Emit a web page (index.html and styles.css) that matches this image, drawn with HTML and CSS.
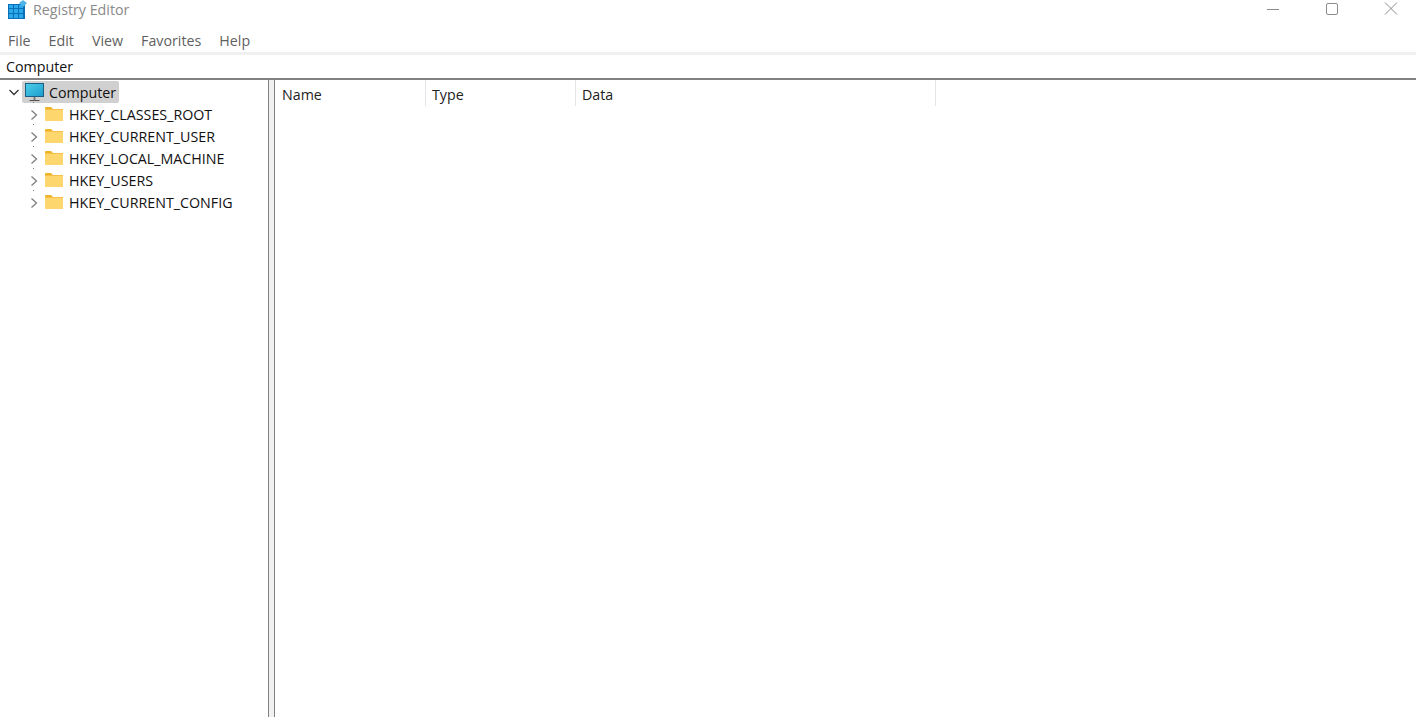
FILE: index.html
```html
<!DOCTYPE html>
<html lang="en">
<head>
<meta charset="utf-8">
<title>Registry Editor</title>
<link rel="stylesheet" href="styles.css">
</head>
<body>
<div class="window">
  <header class="titlebar">
    <svg class="app-icon" width="20" height="20" viewBox="0 0 20 20">
      <rect x="0" y="4" width="17" height="15" fill="#0b6fb5"/>
      <g fill="#29a9ec">
        <rect x="1" y="5" width="4" height="3"/><rect x="6" y="5" width="4" height="3"/><rect x="11" y="5" width="4" height="3"/>
        <rect x="1" y="9" width="4" height="4"/><rect x="6" y="9" width="4" height="4"/><rect x="11" y="9" width="4" height="4"/>
        <rect x="1" y="14" width="4" height="4"/><rect x="6" y="14" width="4" height="4"/><rect x="11" y="14" width="4" height="4"/>
      </g>
      <path d="M15 0 L19 3 L15 7 L11 3 Z" fill="#4fb4e6"/>
    </svg>
    <span class="app-title">Registry Editor</span>
    <div class="controls">
      <svg width="14" height="14" viewBox="0 0 14 14"><path d="M1 8.5H13" stroke="#8c8c8c" fill="none"/></svg>
      <svg width="14" height="14" viewBox="0 0 14 14"><rect x="1.5" y="2.5" width="11" height="11" rx="1.5" stroke="#8c8c8c" fill="none"/></svg>
      <svg width="14" height="14" viewBox="0 0 14 14"><path d="M1 1.5L13 13.5M13 1.5L1 13.5" stroke="#8c8c8c" fill="none"/></svg>
    </div>
  </header>
  <nav class="menubar">
    <span>File</span><span>Edit</span><span>View</span><span>Favorites</span><span>Help</span>
  </nav>
  <div class="address">Computer</div>
  <main class="panes">
    <aside class="tree">
      <div class="node root">
        <svg class="chev" width="12" height="12" viewBox="0 0 12 12"><path d="M1.5 4L6 8.5L10.5 4" stroke="#333" stroke-width="1.3" fill="none"/></svg>
        <span class="selected">
          <svg width="20" height="20" viewBox="0 0 20 20">
            <defs><linearGradient id="scr" x1="0" y1="0" x2="1" y2="1"><stop offset="0" stop-color="#4fd0e8"/><stop offset="1" stop-color="#1a9ccf"/></linearGradient></defs>
            <rect x="0.5" y="1.5" width="18" height="13" fill="url(#scr)" stroke="#1b5f86"/>
            <rect x="8.5" y="15" width="2" height="3" fill="#7a7a7a"/>
            <rect x="4.5" y="18" width="10" height="1" fill="#555"/>
          </svg>
          <span>Computer</span>
        </span>
      </div>
      <div class="node child"><svg class="chev" width="10" height="12" viewBox="0 0 10 12"><path d="M2.5 1.5L7.5 6L2.5 10.5" stroke="#808080" stroke-width="1.3" fill="none"/></svg><svg class="folder" width="19" height="14" viewBox="0 0 19 14"><path d="M0 2V1Q0 0 1 0H6L8 2Z" fill="#f0b429"/><rect x="0" y="2" width="18" height="12" fill="#fdd76d"/><rect x="0" y="2" width="18" height="1" fill="#f5c04a"/></svg><span>HKEY_CLASSES_ROOT</span></div>
      <div class="node child"><svg class="chev" width="10" height="12" viewBox="0 0 10 12"><path d="M2.5 1.5L7.5 6L2.5 10.5" stroke="#808080" stroke-width="1.3" fill="none"/></svg><svg class="folder" width="19" height="14" viewBox="0 0 19 14"><path d="M0 2V1Q0 0 1 0H6L8 2Z" fill="#f0b429"/><rect x="0" y="2" width="18" height="12" fill="#fdd76d"/><rect x="0" y="2" width="18" height="1" fill="#f5c04a"/></svg><span>HKEY_CURRENT_USER</span></div>
      <div class="node child"><svg class="chev" width="10" height="12" viewBox="0 0 10 12"><path d="M2.5 1.5L7.5 6L2.5 10.5" stroke="#808080" stroke-width="1.3" fill="none"/></svg><svg class="folder" width="19" height="14" viewBox="0 0 19 14"><path d="M0 2V1Q0 0 1 0H6L8 2Z" fill="#f0b429"/><rect x="0" y="2" width="18" height="12" fill="#fdd76d"/><rect x="0" y="2" width="18" height="1" fill="#f5c04a"/></svg><span>HKEY_LOCAL_MACHINE</span></div>
      <div class="node child"><svg class="chev" width="10" height="12" viewBox="0 0 10 12"><path d="M2.5 1.5L7.5 6L2.5 10.5" stroke="#808080" stroke-width="1.3" fill="none"/></svg><svg class="folder" width="19" height="14" viewBox="0 0 19 14"><path d="M0 2V1Q0 0 1 0H6L8 2Z" fill="#f0b429"/><rect x="0" y="2" width="18" height="12" fill="#fdd76d"/><rect x="0" y="2" width="18" height="1" fill="#f5c04a"/></svg><span>HKEY_USERS</span></div>
      <div class="node child"><svg class="chev" width="10" height="12" viewBox="0 0 10 12"><path d="M2.5 1.5L7.5 6L2.5 10.5" stroke="#808080" stroke-width="1.3" fill="none"/></svg><svg class="folder" width="19" height="14" viewBox="0 0 19 14"><path d="M0 2V1Q0 0 1 0H6L8 2Z" fill="#f0b429"/><rect x="0" y="2" width="18" height="12" fill="#fdd76d"/><rect x="0" y="2" width="18" height="1" fill="#f5c04a"/></svg><span>HKEY_CURRENT_CONFIG</span></div>
    </aside>
    <div class="splitter"></div>
    <section class="list">
      <div class="headers">
        <div class="col col-name">Name</div>
        <div class="col col-type">Type</div>
        <div class="col col-data">Data</div>
      </div>
    </section>
  </main>
</div>
</body>
</html>
```
FILE: styles.css
```css
html, body {
  margin: 0;
  height: 100%;
  background: #fff;
}
.window {
  height: 717px;
  width: 1416px;
  overflow: hidden;
  display: flex;
  flex-direction: column;
  font-family: "Open Sans", "Noto Sans", sans-serif;
  font-size: 14.25px;
  color: #111;
}
.titlebar {
  height: 30px;
  flex: none;
  display: flex;
  align-items: flex-start;
  padding-left: 8px;
}
.app-icon { flex: none; }
.app-title {
  margin-left: 5px;
  line-height: 19px;
  color: #8a8a8a;
}
.controls {
  margin-left: auto;
  display: flex;
  gap: 45px;
  padding-top: 1px;
  padding-right: 18px;
}
.menubar {
  height: 22px;
  flex: none;
  display: flex;
  gap: 18px;
  padding-left: 8px;
  line-height: 22px;
  color: #5f5f5f;
}
.address {
  flex: none;
  height: 23px;
  border-top: 3px solid #f0f0f0;
  border-bottom: 2px solid #828282;
  padding-left: 6px;
  line-height: 23px;
  color: #111;
}
.panes {
  flex: 1;
  display: flex;
  min-height: 0;
}
.tree {
  width: 268px;
  flex: none;
  padding-top: 1px;
}
.node {
  height: 22px;
  display: flex;
  align-items: center;
  white-space: nowrap;
}
.root { padding-left: 8px; }
.root .chev { flex: none; }
.selected {
  margin-left: 2px;
  height: 22px;
  padding: 0 3px 0 3px;
  display: flex;
  align-items: center;
  gap: 4px;
  background: #d0d0d0;
  border-radius: 2px;
}
.child {
  position: relative;
  padding-left: 29px;
}
.child::before {
  content: "";
  position: absolute;
  left: 33px;
  top: -1px;
  width: 1px;
  height: 1px;
  background: #777;
}
.child .chev { margin-top: 2px; }
.child .folder { margin-left: 6px; margin-right: 5px; }
.splitter {
  width: 5px;
  flex: none;
  background: #f0f0f0;
  border-left: 1px solid #828282;
  border-right: 1px solid #828282;
}
.list { flex: 1; }
.headers {
  display: flex;
  height: 26px;
  line-height: 29px;
  color: #222;
}
.col {
  box-sizing: border-box;
  padding-left: 6px;
  border-right: 1px solid #e5e5e5;
}
.col-name { width: 151px; padding-left: 7px; }
.col-type { width: 150px; }
.col-data { width: 360px; }
```
